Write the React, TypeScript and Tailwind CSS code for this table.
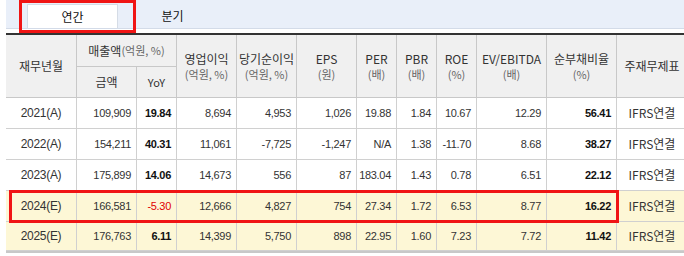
import React from "react";

type Row = {
  label: string;
  sales: string;
  yoy: string;
  op: string;
  net: string;
  eps: string;
  per: string;
  pbr: string;
  roe: string;
  ev: string;
  debt: string;
  est?: boolean;
  neg?: boolean;
};

const rows: Row[] = [
  { label: "2021(A)", sales: "109,909", yoy: "19.84", op: "8,694", net: "4,953", eps: "1,026", per: "19.88", pbr: "1.84", roe: "10.67", ev: "12.29", debt: "56.41" },
  { label: "2022(A)", sales: "154,211", yoy: "40.31", op: "11,061", net: "-7,725", eps: "-1,247", per: "N/A", pbr: "1.38", roe: "-11.70", ev: "8.68", debt: "38.27" },
  { label: "2023(A)", sales: "175,899", yoy: "14.06", op: "14,673", net: "556", eps: "87", per: "183.04", pbr: "1.43", roe: "0.78", ev: "6.51", debt: "22.12" },
  { label: "2024(E)", sales: "166,581", yoy: "-5.30", op: "12,666", net: "4,827", eps: "754", per: "27.34", pbr: "1.72", roe: "6.53", ev: "8.77", debt: "16.22", est: true, neg: true },
  { label: "2025(E)", sales: "176,763", yoy: "6.11", op: "14,399", net: "5,750", eps: "898", per: "22.95", pbr: "1.60", roe: "7.23", ev: "7.72", debt: "11.42", est: true },
];

const kr = "font-['Noto_Sans_CJK_KR','Noto_Sans',sans-serif]";
const num = "font-['Liberation_Sans','Noto_Sans_CJK_KR',sans-serif] text-[11px] tracking-[-0.3px]";

function Head({ title, unit }: { title: string; unit: string }) {
  return (
    <div className="row-span-2 flex flex-col items-center justify-center gap-[1px] border-r border-b border-[#c8c8c8]">
      <span className="text-[12px] leading-[15px] text-[#333]">{title}</span>
      <span className="text-[11px] leading-[14px] text-[#666]">{unit}</span>
    </div>
  );
}

export default function App() {
  const cell = "flex items-center justify-end pr-[5px] border-r border-b border-[#d0d0d0]";
  return (
    <div className={`relative w-[684px] h-[256px] overflow-hidden bg-white pl-[6px] ${kr}`}>
      {/* 탭 */}
      <div className="h-[29px] bg-[#e9eff9] border-b border-[#d3dbe8] flex items-end pl-[21px]">
        <div className="h-[24px] w-[91px] bg-white border border-b-0 border-[#d5dce6] flex items-center justify-center text-[12px] text-[#111]">
          연간
        </div>
        <div className="h-[24px] w-[91px] ml-[9px] flex items-center justify-center text-[12px] text-[#111]">
          분기
        </div>
      </div>
      <div className="h-[4px]" />
      <div className="h-[2px] bg-[#333]" />

      {/* 표 */}
      <div className="grid grid-cols-[71px_60px_40px_60px_60px_60px_40px_40px_40px_70px_70px_70px] grid-rows-[32px_31px] bg-[#f0f0f0] w-[681px]">
        <div className="row-span-2 flex items-center justify-center border-r border-b border-[#c8c8c8] text-[12px] text-[#333]">
          재무년월
        </div>
        <div className="col-span-2 flex items-center justify-center border-r border-b border-[#c8c8c8]">
          <span className="text-[12px] text-[#333]">매출액</span>
          <span className="text-[11px] text-[#666]">(억원, %)</span>
        </div>
        <Head title="영업이익" unit="(억원, %)" />
        <Head title="당기순이익" unit="(억원, %)" />
        <Head title="EPS" unit="(원)" />
        <Head title="PER" unit="(배)" />
        <Head title="PBR" unit="(배)" />
        <Head title="ROE" unit="(%)" />
        <Head title="EV/EBITDA" unit="(배)" />
        <Head title="순부채비율" unit="(%)" />
        <div className="row-span-2 flex items-center justify-center border-b border-[#c8c8c8] text-[12px] text-[#333]">
          주재무제표
        </div>
        <div className="flex items-center justify-center border-r border-b border-[#c8c8c8] text-[12px] text-[#333]">
          금액
        </div>
        <div className="flex items-center justify-center border-r border-b border-[#c8c8c8] text-[11px] text-[#333]">
          YoY
        </div>
      </div>

      {rows.map((r, i) => {
        const last = i === rows.length - 1;
        return (
          <div
            key={r.label}
            className={`grid grid-cols-[71px_60px_40px_60px_60px_60px_40px_40px_40px_70px_70px_70px] h-[31px] w-[681px] text-[#333] ${r.est ? "bg-[#fdf7d6]" : "bg-white"} ${last ? "border-b-2 border-[#c8c8c8]" : ""}`}
          >
            <div className={`flex items-center justify-center border-r border-b border-[#d0d0d0] ${num} text-[12px]`}>{r.label}</div>
            <div className={`${cell} ${num}`}>{r.sales}</div>
            <div className={`${cell} ${num} font-bold ${r.neg ? "text-[#e00000] font-normal" : "text-[#111]"}`}>{r.yoy}</div>
            <div className={`${cell} ${num}`}>{r.op}</div>
            <div className={`${cell} ${num}`}>{r.net}</div>
            <div className={`${cell} ${num}`}>{r.eps}</div>
            <div className={`${cell} ${num}`}>{r.per}</div>
            <div className={`${cell} ${num}`}>{r.pbr}</div>
            <div className={`${cell} ${num}`}>{r.roe}</div>
            <div className={`${cell} ${num}`}>{r.ev}</div>
            <div className={`${cell} ${num} font-bold text-[#111]`}>{r.debt}</div>
            <div className="flex items-center justify-center border-b border-[#d0d0d0] text-[12px]">IFRS연결</div>
          </div>
        );
      })}

      {/* 강조 표시 */}
      <div className="absolute left-[19px] top-0 w-[117px] h-[33px] border-[3px] border-[#f01414]" />
      <div className="absolute left-[9px] top-[190px] w-[610px] h-[33px] border-[3px] border-[#f01414]" />
    </div>
  );
}
